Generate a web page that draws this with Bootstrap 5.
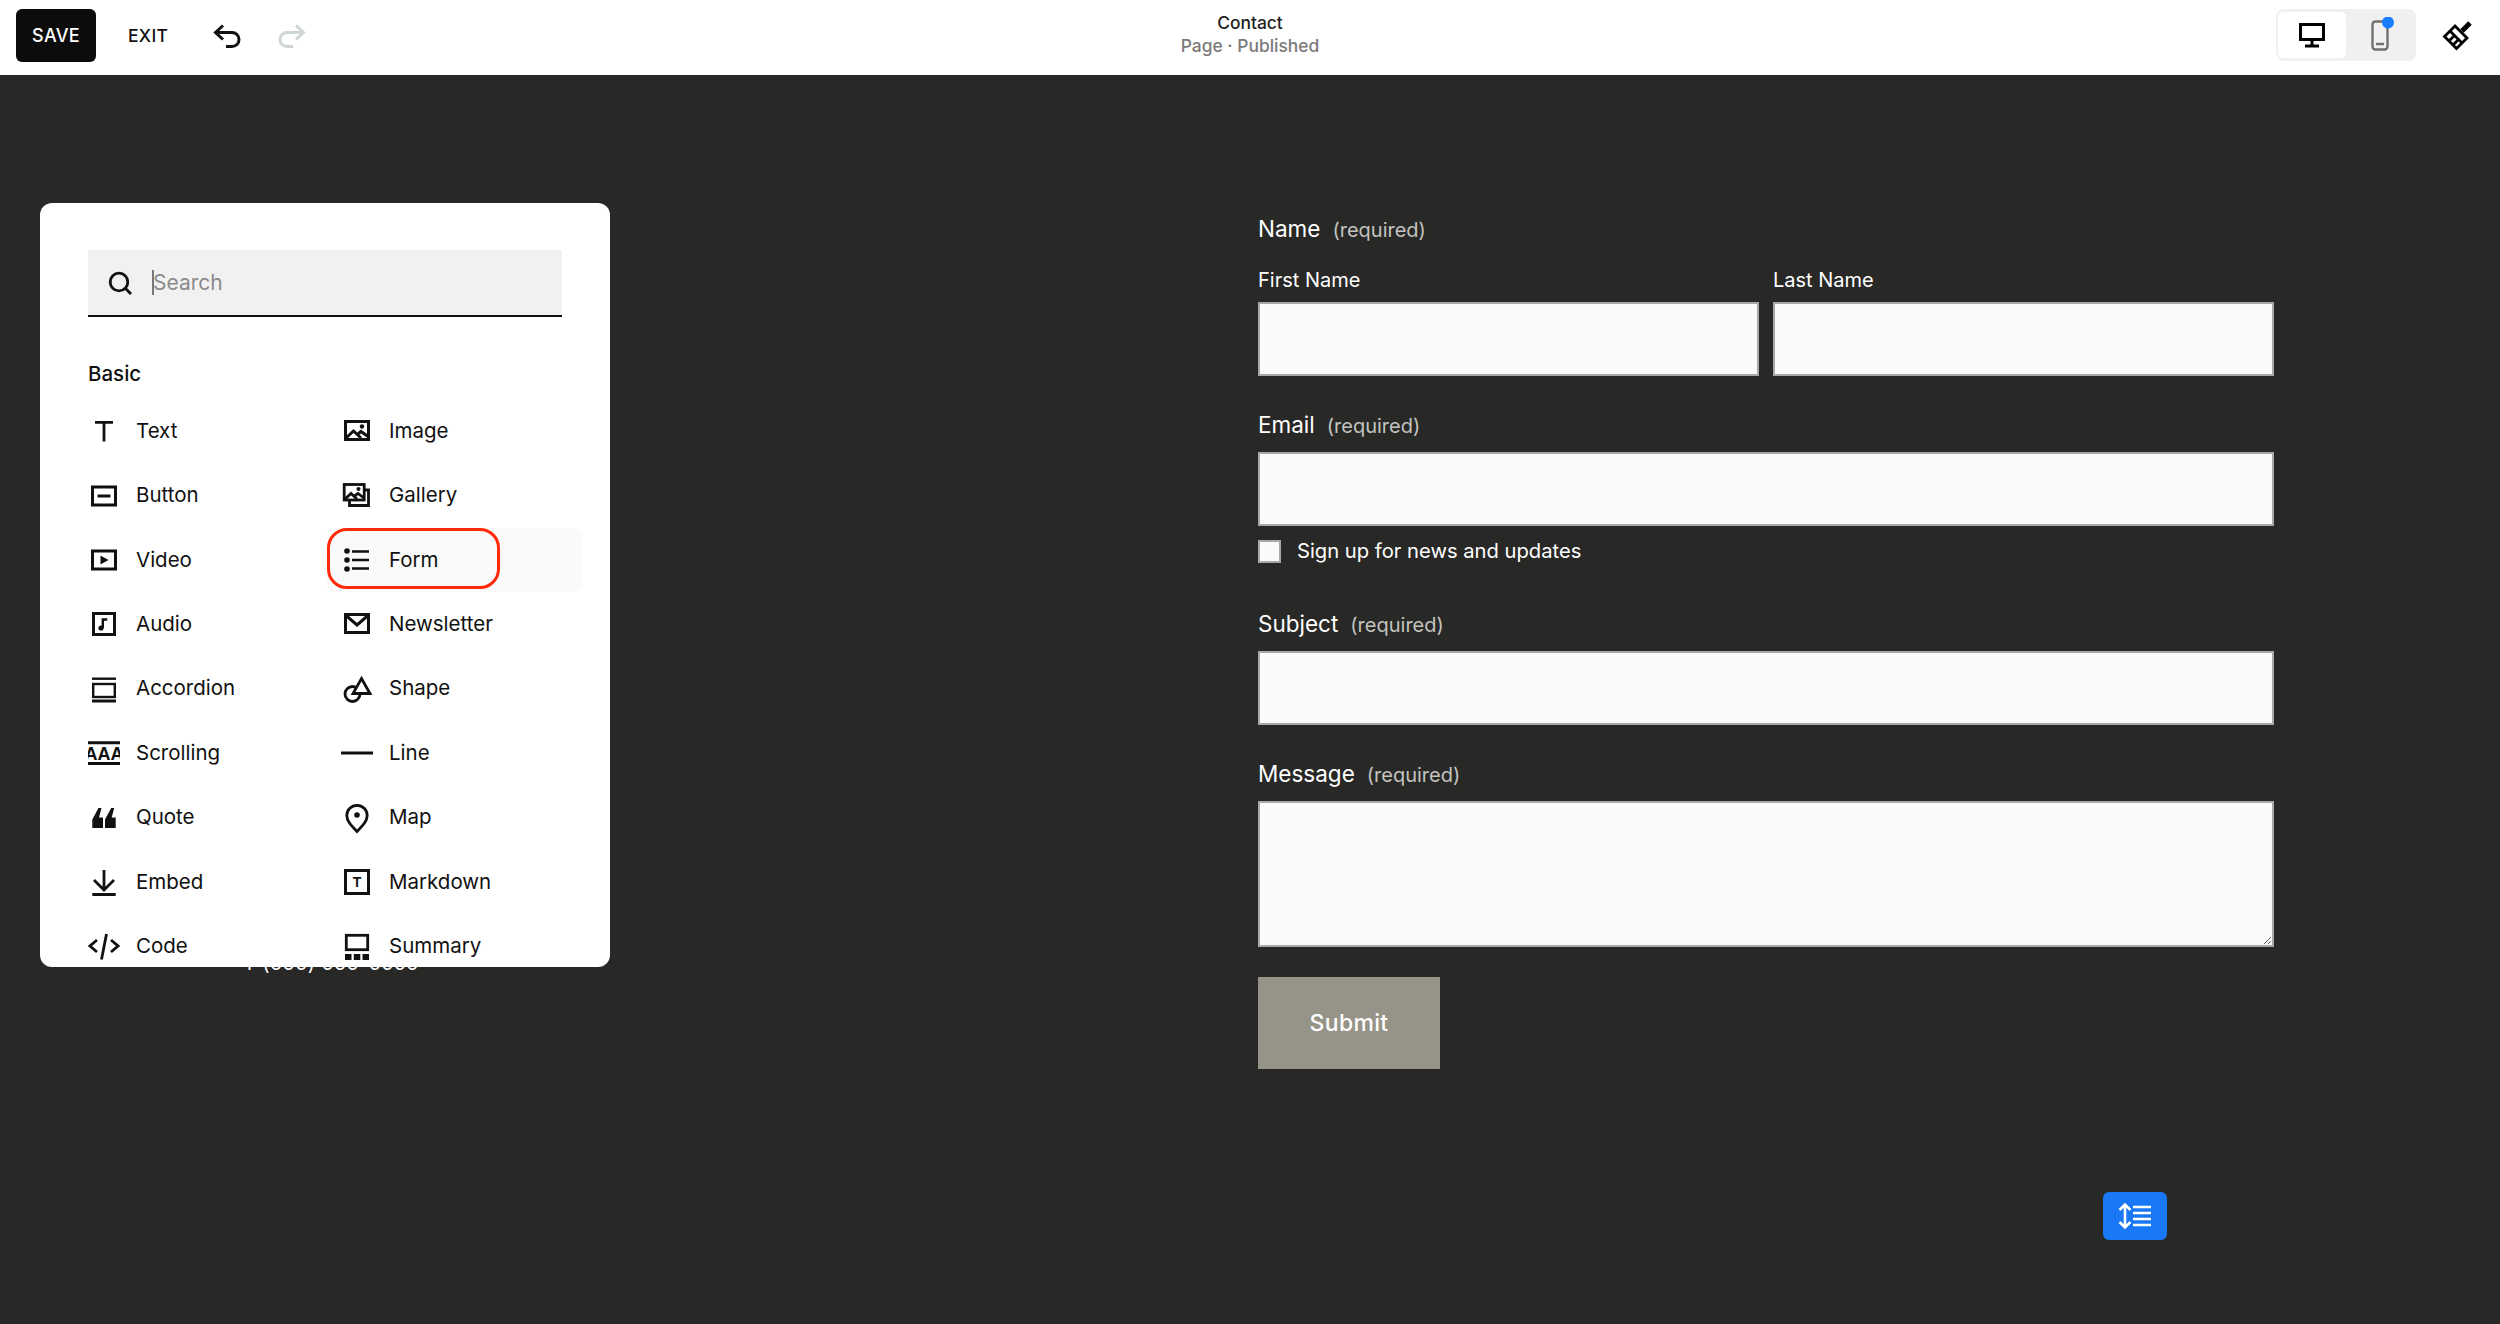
<!doctype html>
<html lang="en">
<head>
<meta charset="utf-8">
<title>Contact</title>
<link href="https://cdn.jsdelivr.net/npm/bootstrap@5.3.0/dist/css/bootstrap.min.css" rel="stylesheet">
<style>
html,body{height:100%}
body{font-family:Inter,"Liberation Sans",sans-serif;background:#282826;color:#111;overflow:hidden}
.topbar{height:75px;background:#fff;padding:0 26px 0 16px;position:relative}
.save-btn{width:80px;height:53px;background:#0c0c0c;color:#fff;border:0;border-radius:6px;font-size:18px;font-weight:500;padding:0;letter-spacing:.3px;margin-bottom:5px}
.save-btn:hover{background:#0c0c0c;color:#fff}
.exit-btn{border:0;background:none;color:#111;font-size:17.5px;font-weight:500;padding:0;margin-left:32px;letter-spacing:.3px;margin-bottom:3px}
.hist{display:block;margin-bottom:4px}
.hist-undo{margin-left:45px}
.hist-redo{margin-left:37px}
.page-title{position:absolute;left:0;right:0;top:11px;text-align:center;font-size:17.4px;line-height:23px;font-weight:500;color:#222;pointer-events:none}
.page-title span{color:#7a7a7a;display:block}
.device-seg{width:140px;height:52px;background:#f0f0f0;border-radius:8px;padding:3px 3px 3px 2px;margin-left:auto;margin-bottom:5px}
.device-on{width:68px;height:46px;background:#fff;border-radius:5px}
.device-off{width:67px;height:46px;position:relative}
.brush{margin-left:26px;margin-bottom:5px}
.canvas-area{position:relative;height:1249px}
.form-wrap{width:1016px;margin-left:1258px;padding-top:139px;color:#fff}
.field-label{font-size:22.5px;line-height:30px;height:30px;margin:0 0 12px}
.field-label em{font-style:normal;font-size:20px;line-height:1;color:#c3c3c0;margin-left:12px}
.field-label.tight{margin-bottom:23px}
.sub-label{font-size:20px;line-height:26px;height:26px;margin:0 0 9px;display:block}
.field-gap{margin-top:34px}
.field-gap-lg{margin-top:47px}
.name-row{display:grid;grid-template-columns:501px 501px;column-gap:14px}
.sq-input,.sq-input:focus{height:74px;background:#fafafa;border:2px solid #a8a8a6;border-radius:0;box-shadow:none}
textarea.sq-input,textarea.sq-input:focus{height:146px;display:block}
.opt-row{margin-top:14px;height:22px}
input.sq-check[type=checkbox]{width:23px;height:23px;background-color:#fafafa;border:2px solid #a8a8a6;border-radius:0;flex:none;margin:0}
.opt-row label{font-size:20.2px;line-height:22px;margin-left:16px}
.submit-btn,.submit-btn:hover{display:block;margin-top:30px;width:182px;height:92px;background:#969488;color:#fff;border:0;border-radius:0;font-size:23px;font-weight:500;padding:0;letter-spacing:.3px}
.behind-text{position:absolute;left:243px;top:873px;color:#fff;font-size:20px;line-height:30px;letter-spacing:.4px}
.blocks-panel{position:absolute;left:40px;top:128px;width:570px;height:764px;background:#fff;border-radius:12px;overflow:hidden;padding:47px 28px 0 48px}
.search-box{height:67px;background:#f1f1f1;border-bottom:2px solid #111;padding-left:19px;margin-right:20px;position:relative}
.search-box svg{flex:none}
.search-box input,.search-box input:focus{border:0;background:none;box-shadow:none;padding:0;font-size:21px;color:#111;margin-left:20px;border-radius:0}
.search-box input::placeholder{color:#8b8b8b}
.caret-bar{position:absolute;left:64px;top:20px;width:2px;height:25px;background:#777}
.group-title{font-size:20.5px;font-weight:500;line-height:26px;margin:44px 0 12px}
.block-grid{display:grid;grid-template-columns:253px 241px;grid-auto-rows:64.4px}
.block-item{display:flex;align-items:center;gap:16px;font-size:20.5px;color:#111;position:relative}
.block-item svg{flex:none}
.block-hot{background:#fafafa;border-radius:8px;margin-left:-14px;padding-left:14px}
.red-ring{position:absolute;left:0;top:0;width:173px;height:61px;border:3.5px solid #ff2a0a;border-radius:20px}
.spacing-btn{position:absolute;left:2103px;top:1117px;width:64px;height:48px;background:#1878f5;border-radius:6px}
</style>
</head>
<body>
<header class="topbar d-flex align-items-center">
  <button class="btn save-btn" type="button">SAVE</button>
  <button class="btn exit-btn" type="button">EXIT</button>
  <svg class="hist hist-undo" width="28" height="24" viewBox="0 0 28 24" fill="none" stroke="#111" stroke-width="3"><path d="M10 1.500 2.500 8.500 10 15.500M2.500 8.500H19a7 7 0 0 1 0 14h-6"/></svg>
  <svg class="hist hist-redo" width="28" height="24" viewBox="0 0 28 24" fill="none" stroke="#cfd6d6" stroke-width="3"><path d="M18 1.500 25.500 8.500 18 15.500M25.500 8.500H9a7 7 0 0 0 0 14h6"/></svg>
  <div class="page-title">Contact<span>Page · Published</span></div>
  <div class="device-seg d-flex">
    <div class="device-on d-flex align-items-center justify-content-center">
      <svg width="28" height="26" viewBox="0 0 28 26" fill="none" stroke="#000" stroke-width="3"><rect x="2.500" y="2.500" width="23" height="15"/><path d="M14 18v5M7 24h14"/></svg>
    </div>
    <div class="device-off d-flex align-items-center justify-content-center">
      <svg width="28" height="36" viewBox="0 0 28 36" fill="none"><rect x="6.500" y="4.500" width="15" height="28" rx="3" stroke="#707070" stroke-width="2.400"/><path d="M10 27h8" stroke="#707070" stroke-width="2.400"/><circle cx="22" cy="5.500" r="6" fill="#1a7cff"/></svg>
    </div>
  </div>
  <svg class="brush" width="32" height="32" viewBox="0 0 32 32" fill="none" stroke="#000" stroke-width="2.800" stroke-linejoin="miter"><path d="M2.500 17.500 13 7l12 12-10.500 10.500z"/><path d="M8 12l12 12M7 22l6-6M11 26l6-6"/><path d="M20 12l8-8" stroke-width="5"/></svg>
</header>

<main class="canvas-area">
  <form class="form-wrap" onsubmit="return false">
    <div class="field-label tight">Name<em>(required)</em></div>
    <div class="name-row">
      <div><label class="sub-label" for="fn">First Name</label><input id="fn" class="form-control sq-input" type="text"></div>
      <div><label class="sub-label" for="ln">Last Name</label><input id="ln" class="form-control sq-input" type="text"></div>
    </div>
    <div class="field-label field-gap">Email<em>(required)</em></div>
    <input class="form-control sq-input" type="text" aria-label="Email">
    <div class="opt-row d-flex align-items-center">
      <input id="news" class="form-check-input sq-check" type="checkbox">
      <label for="news">Sign up for news and updates</label>
    </div>
    <div class="field-label field-gap-lg">Subject<em>(required)</em></div>
    <input class="form-control sq-input" type="text" aria-label="Subject">
    <div class="field-label field-gap">Message<em>(required)</em></div>
    <textarea class="form-control sq-input" aria-label="Message"></textarea>
    <button class="btn submit-btn" type="submit">Submit</button>
  </form>

  <div class="behind-text">T (555) 555-5555</div>

  <aside class="blocks-panel">
    <div class="search-box d-flex align-items-center">
      <svg width="26" height="26" viewBox="0 0 26 26" fill="none" stroke="#111" stroke-width="2.800"><circle cx="12" cy="12" r="8.800"/><path d="M18 18l6 6"/></svg>
      <input class="form-control" type="text" placeholder="Search" aria-label="Search">
      <span class="caret-bar"></span>
    </div>
    <div class="group-title">Basic</div>
    <div class="block-grid">
      <div class="block-item"><svg width="32" height="32" viewBox="0 0 32 32" fill="none" stroke="#111" stroke-width="2.800"><path d="M7 7.300h18M16 7v19.500"/></svg>Text</div>
      <div class="block-item"><svg width="32" height="32" viewBox="0 0 32 32" fill="none" stroke="#111" stroke-width="3"><rect x="4.500" y="6.500" width="23" height="18"/><path d="M5 23l7.500-7 7.500 7M17 19l3-2.500 7 5"/><circle cx="21" cy="11.500" r="2.200" fill="#111" stroke="none"/></svg>Image</div>

      <div class="block-item"><svg width="32" height="32" viewBox="0 0 32 32" fill="none" stroke="#111" stroke-width="3"><rect x="4.500" y="7" width="23" height="18"/><path d="M9.500 16h13"/></svg>Button</div>
      <div class="block-item"><svg width="32" height="32" viewBox="0 0 32 32" fill="none" stroke="#111" stroke-width="2.800"><path d="M8.500 20.500v5h19v-15.500h-4"/><rect x="3.200" y="4.500" width="20" height="15.500" fill="#fff"/><path d="M4 19l6-5.500 6 5.500M14 15.500l3-2 6 4.500"/><circle cx="17.500" cy="9" r="2" fill="#111" stroke="none"/></svg>Gallery</div>

      <div class="block-item"><svg width="32" height="32" viewBox="0 0 32 32" fill="none" stroke="#111" stroke-width="3"><rect x="4.500" y="7" width="23" height="18"/><path d="M12.500 11.500v9l8-4.500z" fill="#111" stroke="none"/></svg>Video</div>
      <div class="block-item block-hot"><svg width="32" height="32" viewBox="0 0 32 32" fill="none" stroke="#111" stroke-width="2.600"><path d="M11 7.500h17M11 16h17M11 24.500h17"/><g fill="#111" stroke="none"><circle cx="6" cy="7" r="2.800"/><circle cx="6" cy="16" r="2.800"/><circle cx="6" cy="25" r="2.800"/></g></svg>Form<span class="red-ring"></span></div>

      <div class="block-item"><svg width="32" height="32" viewBox="0 0 32 32" fill="none" stroke="#111" stroke-width="3"><rect x="5.500" y="5.500" width="21" height="21"/><path d="M14.800 20V11.500h4.500" stroke-width="2.400"/><circle cx="13" cy="20" r="2.600" fill="#111" stroke="none"/></svg>Audio</div>
      <div class="block-item"><svg width="32" height="32" viewBox="0 0 32 32" fill="none" stroke="#111" stroke-width="3"><rect x="4.500" y="6.500" width="23" height="18"/><path d="M5 7.500l11 9.500 11-9.500"/></svg>Newsletter</div>

      <div class="block-item"><svg width="32" height="32" viewBox="0 0 32 32" fill="none" stroke="#111" stroke-width="2.400"><rect x="5.200" y="11" width="21.600" height="13"/><path d="M4 5.700h24"/><path d="M4 28h24" stroke-width="3"/></svg>Accordion</div>
      <div class="block-item"><svg width="32" height="32" viewBox="0 0 32 32" fill="none" stroke="#111" stroke-width="2.800"><circle cx="11.500" cy="21" r="7.500"/><path d="M20.500 5.500 29 20.500H12z" fill="#fff"/></svg>Shape</div>

      <div class="block-item"><svg width="32" height="32" viewBox="0 0 32 32" fill="none" stroke="#111" stroke-width="3"><path d="M0 5.700h32M0 26.500h32"/><text x="16" y="23" text-anchor="middle" font-family="Liberation Sans,sans-serif" font-size="18" font-weight="700" fill="#111" stroke="none">AAA</text></svg>Scrolling</div>
      <div class="block-item"><svg width="32" height="32" viewBox="0 0 32 32" fill="none" stroke="#111" stroke-width="3"><path d="M0 16h32"/></svg>Line</div>

      <div class="block-item"><svg width="32" height="32" viewBox="0 0 32 32" fill="#111"><path d="M4.300 26V17.500L10.500 6h3L11 15.500h4V26zM17 26V17.500L23.200 6h3L23.700 15.500h4V26z"/></svg>Quote</div>
      <div class="block-item"><svg width="32" height="32" viewBox="0 0 32 32" fill="none" stroke="#111" stroke-width="2.800"><path d="M16 29.500C10 23.500 5.800 19 5.800 13.500a10.200 10.200 0 0 1 20.400 0c0 5.500-4.200 10-10.200 16z"/><circle cx="16" cy="13" r="2.800" fill="#111" stroke="none"/></svg>Map</div>

      <div class="block-item"><svg width="32" height="32" viewBox="0 0 32 32" fill="none" stroke="#111" stroke-width="2.800"><path d="M16 4v20M6 14 16 24 26 14"/><path d="M4.300 28.500h23.400" stroke-width="3"/></svg>Embed</div>
      <div class="block-item"><svg width="32" height="32" viewBox="0 0 32 32" fill="none" stroke="#111" stroke-width="3"><rect x="4.500" y="4.500" width="23" height="23"/><text x="16" y="21" text-anchor="middle" font-family="Liberation Sans,sans-serif" font-size="14" font-weight="700" fill="#111" stroke="none">T</text></svg>Markdown</div>

      <div class="block-item"><svg width="32" height="32" viewBox="0 0 32 32" fill="none" stroke="#111" stroke-width="2.800"><path d="M9 10 2 16 9 22M23 10l7 6-7 6M18.500 4 13.500 29.500"/></svg>Code</div>
      <div class="block-item"><svg width="32" height="32" viewBox="0 0 32 32" fill="none" stroke="#111" stroke-width="2.800"><rect x="5.300" y="5.300" width="21.400" height="14.400"/><g fill="#111" stroke="none"><rect x="4" y="24" width="6.500" height="6"/><rect x="12.800" y="24" width="6.500" height="6"/><rect x="21.500" y="24" width="6.500" height="6"/></g></svg>Summary</div>
    </div>
  </aside>

  <div class="spacing-btn d-flex align-items-center justify-content-center">
    <svg width="36" height="28" viewBox="0 0 36 28" fill="none" stroke="#fff" stroke-width="2.600"><path d="M8 3v22M2.500 8 8 2.500 13.500 8M2.500 20 8 25.500 13.500 20"/><path d="M16 5h18M16 11h18M16 17h18M16 23h18"/></svg>
  </div>
</main>
<script src="https://cdn.jsdelivr.net/npm/bootstrap@5.3.0/dist/js/bootstrap.bundle.min.js"></script>
</body>
</html>
